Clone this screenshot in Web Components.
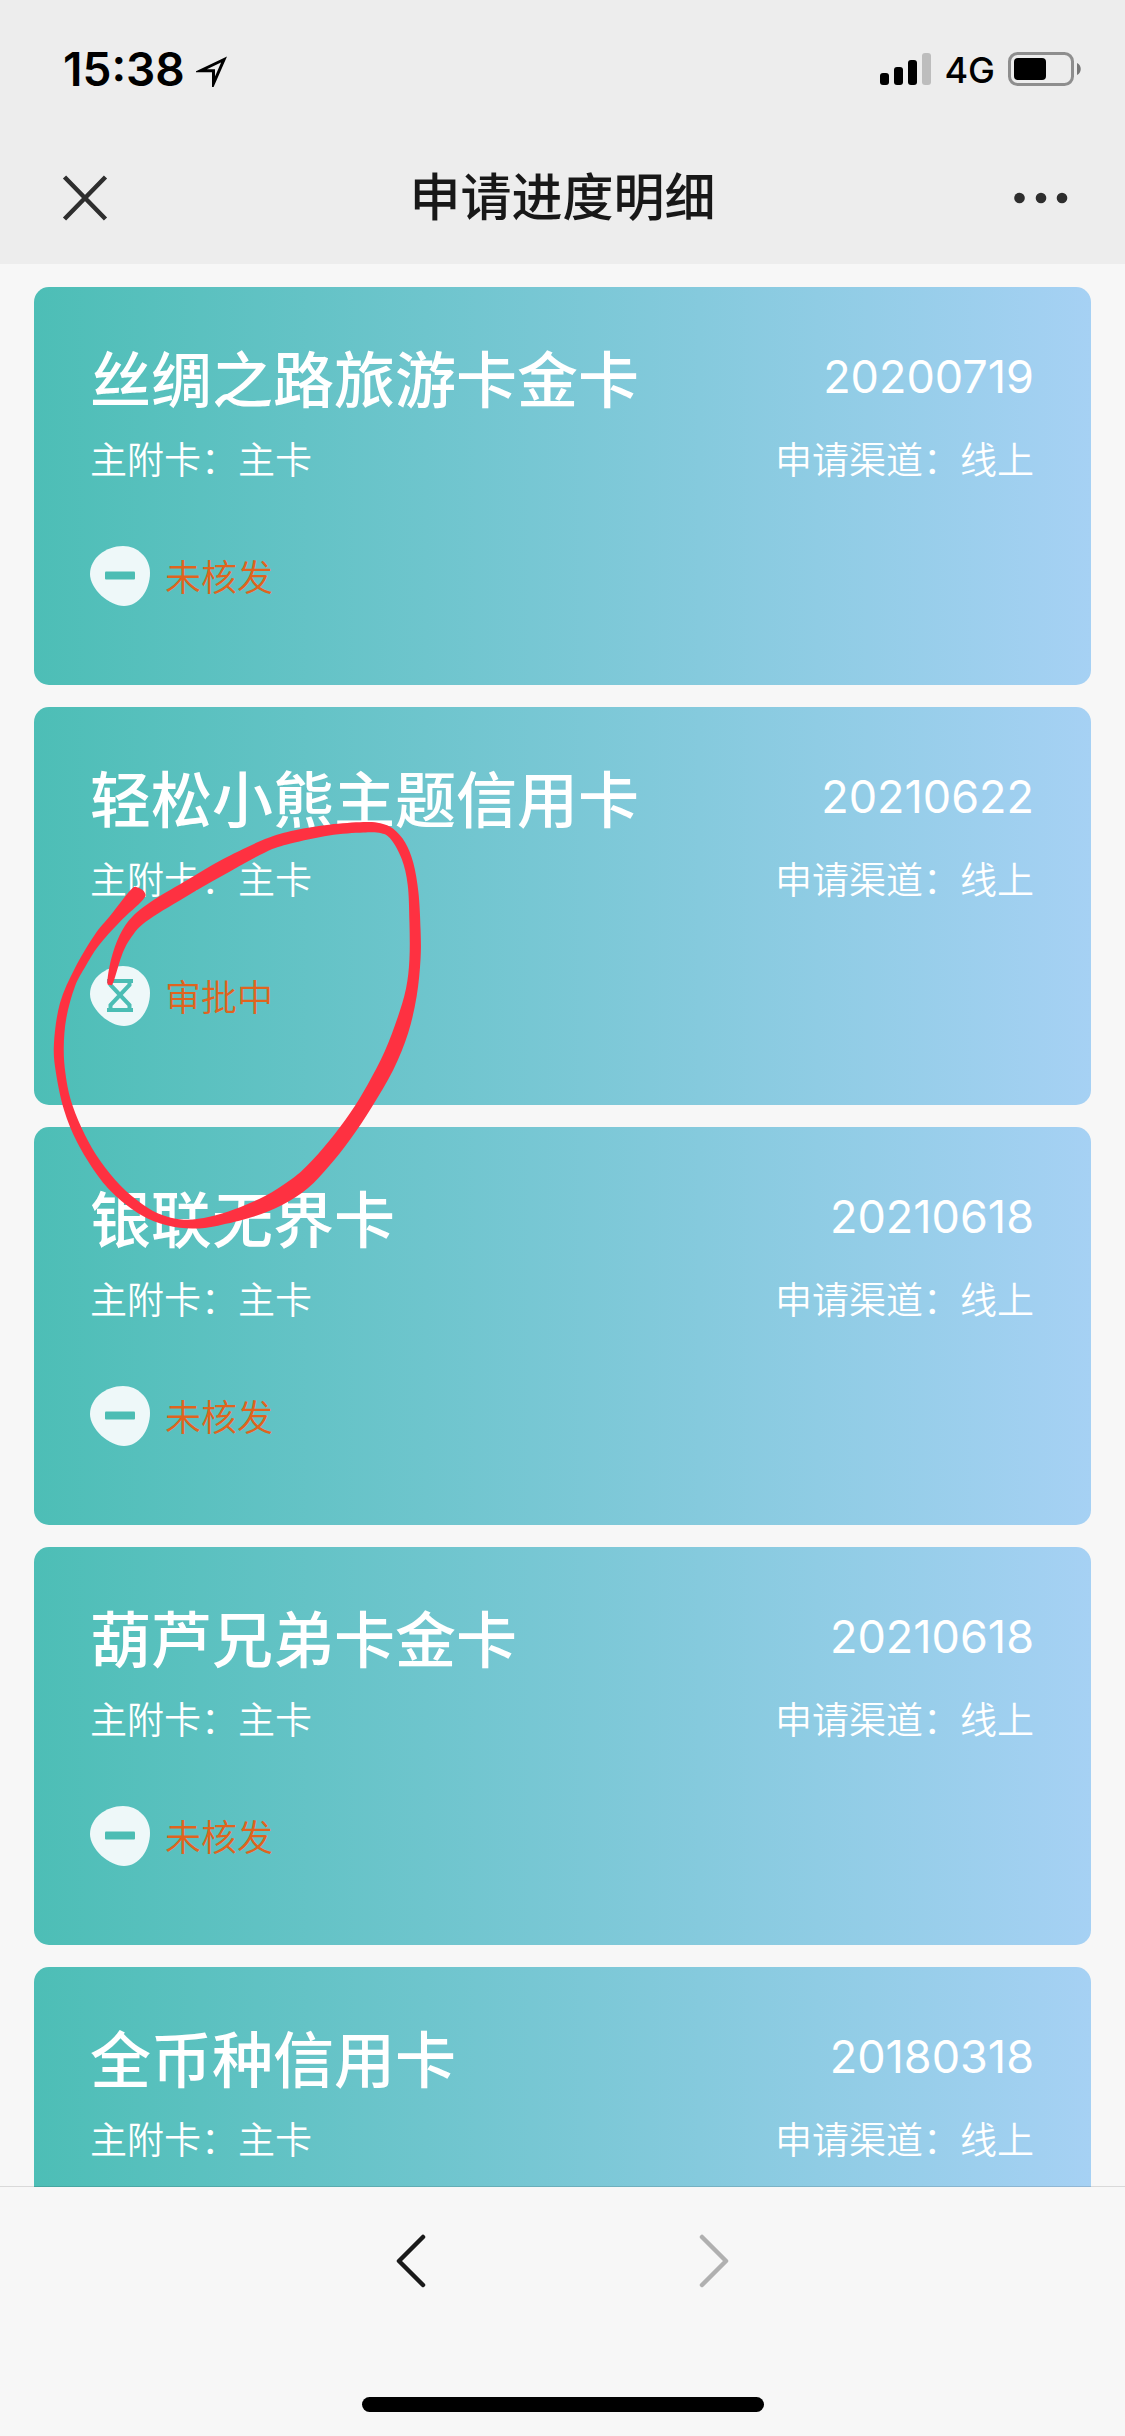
<!DOCTYPE html>
<html lang="zh-CN">
<head>
<meta charset="utf-8">
<meta name="viewport" content="width=device-width, initial-scale=1">
<title>申请进度明细</title>
<style>
  html, body { margin: 0; height: 100%; }
  body {
    background: #f7f7f7;
    font-family: Inter, "Noto Sans CJK SC", sans-serif;
    -webkit-font-smoothing: antialiased;
  }
</style>
</head>
<body>
<progress-app>
  <status-bar slot="top" time="15:38" network="4G"></status-bar>
  <nav-bar slot="top">申请进度明细</nav-bar>

  <card-item date="20200719" holder="主卡" channel="线上" state="rejected">丝绸之路旅游卡金卡</card-item>
  <card-item date="20210622" holder="主卡" channel="线上" state="pending">轻松小熊主题信用卡</card-item>
  <card-item date="20210618" holder="主卡" channel="线上" state="rejected">银联无界卡</card-item>
  <card-item date="20210618" holder="主卡" channel="线上" state="rejected">葫芦兄弟卡金卡</card-item>
  <card-item date="20180318" holder="主卡" channel="线上" state="rejected">全币种信用卡</card-item>

  <ink-loop slot="ink"></ink-loop>
  <tool-bar slot="bottom"></tool-bar>
</progress-app>

<script>
  class BaseElement extends HTMLElement {
    connectedCallback() {
      if (this.shadowRoot) return;
      this.attachShadow({ mode: 'open' }).innerHTML = this.render();
    }
    attr(name) { return this.getAttribute(name) || ''; }
  }

  class ProgressApp extends BaseElement {
    render() {
      return `
        <style>
          :host { display: flex; flex-direction: column; height: 100vh; position: relative; overflow: hidden; }
          header { flex: none; background: #ededed; }
          main { flex: 1; min-height: 0; overflow: hidden; }
          .list { display: flex; flex-direction: column; gap: 22px; padding: 23px 34px; }
          footer { flex: none; position: relative; }
        </style>
        <header><slot name="top"></slot></header>
        <main><div class="list"><slot></slot></div></main>
        <footer><slot name="bottom"></slot></footer>
        <slot name="ink"></slot>`;
    }
  }

  class StatusBar extends BaseElement {
    render() {
      return `
        <style>
          :host { display: flex; justify-content: space-between; align-items: center; box-sizing: border-box; height: 132px; padding: 6px 44px 0 63px; color: #000; }
          div { display: flex; align-items: center; }
          .left { gap: 11px; }
          .right { gap: 13px; }
          time { font-size: 46px; line-height: 54px; font-weight: 600; }
          span { font-size: 36px; line-height: 44px; padding-top: 2px; font-weight: 500; }
          svg { display: block; }
        </style>
        <div class="left">
          <time>${this.attr('time')}</time>
          <svg width="32" height="36" viewBox="0 0 32 36" aria-hidden="true">
            <path d="M28 8.500 4.500 19.700 17.500 19.700 17.500 32.500Z" fill="none" stroke="#000" stroke-width="3" stroke-miterlimit="10"/>
          </svg>
        </div>
        <div class="right">
          <svg width="51" height="34" viewBox="0 0 51 34" aria-hidden="true">
            <rect x="0" y="21" width="9" height="12" rx="3"/>
            <rect x="14" y="15" width="9" height="18" rx="3"/>
            <rect x="28" y="8" width="9" height="25" rx="3"/>
            <rect x="42" y="1" width="9" height="32" rx="3" fill="#bdbdbd"/>
          </svg>
          <span>${this.attr('network')}</span>
          <svg width="73" height="34" viewBox="0 0 73 34" aria-hidden="true">
            <rect x="1.500" y="1.500" width="63" height="31" rx="8" fill="none" stroke="#8e8e8e" stroke-width="3"/>
            <rect x="6" y="6" width="32" height="22" rx="4"/>
            <path d="M69 11C74 13 74 21 69 23Z" fill="#777"/>
          </svg>
        </div>`;
    }
  }

  class NavBar extends BaseElement {
    render() {
      return `
        <style>
          :host { display: flex; justify-content: space-between; align-items: center; height: 132px; padding: 0 52px; box-sizing: border-box; }
          h1 { margin: 0; font-size: 51px; line-height: 66px; font-weight: 500; color: #181818; }
          button { display: flex; padding: 0; border: 0; background: none; }
        </style>
        <button type="button" aria-label="关闭">
          <svg width="66" height="66" viewBox="0 0 66 66"><path d="M12.500 12 53.500 54M53.500 12 12.500 54" stroke="#2e2e2e" stroke-width="4.500"/></svg>
        </button>
        <h1><slot></slot></h1>
        <button type="button" aria-label="更多">
          <svg width="66" height="66" viewBox="0 0 66 66" fill="#2e2e2e"><circle cx="12.500" cy="33" r="5.300"/><circle cx="34" cy="33" r="5.300"/><circle cx="55" cy="33" r="5.300"/></svg>
        </button>`;
    }
  }

  const STATES = {
    rejected: {
      label: '未核发',
      glyph: '<rect x="15" y="25.500" width="30" height="8" rx="1" fill="#4bbdb4"/>'
    },
    pending: {
      label: '审批中',
      glyph: '<path d="M17 15H43M17 44H43M20.500 15V19L39.500 39V44M39.500 15V19L20.500 39V44" fill="none" stroke="#4bbdb4" stroke-width="4"/>'
    }
  };

  class StateBadge extends BaseElement {
    render() {
      const state = STATES[this.attr('state')];
      return `
        <style>
          :host { display: flex; align-items: center; gap: 15px; }
          svg { display: block; }
          span { font-size: 36px; line-height: 50px; padding-top: 3px; font-weight: 350; color: #e0641e; }
        </style>
        <svg width="60" height="60" viewBox="0 0 60 60" aria-hidden="true">
          <path d="M33 0C48 0 60 12 60 27C60 44 49 60 34 60C19 60 0 43 0 28C0 12 16 0 33 0Z" fill="#eef8f9"/>
          ${state.glyph}
        </svg>
        <span>${state.label}</span>`;
    }
  }

  class CardItem extends BaseElement {
    render() {
      return `
        <style>
          :host {
            display: flex; flex-direction: column; flex: none;
            padding: 52px 57px 79px 56px; border-radius: 15px; color: #fff;
            background: linear-gradient(90deg, #4dbeb6, #a6d1f4);
          }
          .row { display: flex; justify-content: space-between; align-items: center; }
          h2 { margin: 0; font-size: 61px; line-height: 84px; font-weight: 500; }
          time { font-size: 45px; line-height: 54px; padding-bottom: 8px; }
          .meta { margin: 13px 0 60px; font-size: 37px; line-height: 50px; font-weight: 350; }
        </style>
        <div class="row"><h2><slot></slot></h2><time>${this.attr('date')}</time></div>
        <div class="row meta"><span>主附卡：${this.attr('holder')}</span><span>申请渠道：${this.attr('channel')}</span></div>
        <state-badge state="${this.attr('state')}"></state-badge>`;
    }
  }

  class ToolBar extends BaseElement {
    render() {
      return `
        <style>
          :host {
            display: flex; flex-direction: column; align-items: center; justify-content: space-between;
            box-sizing: border-box; height: 250px; margin-top: -1px; padding: 40px 0 24px;
            border-top: 1px solid rgba(0, 0, 0, .12);
            background: #f7f7f7; background-clip: padding-box;
          }
          nav { display: flex; gap: 237px; }
          button { display: flex; padding: 0; border: 0; background: none; color: #1a1a1a; }
          button:disabled { color: #b0b0b0; }
          path { fill: none; stroke: currentColor; stroke-width: 4.500; stroke-linecap: round; stroke-linejoin: round; }
          .home { width: 402px; height: 15px; border-radius: 8px; background: #000; }
        </style>
        <nav>
          <button type="button" aria-label="后退"><svg width="66" height="66" viewBox="0 0 66 66"><path d="M45 10 21 34 45 58"/></svg></button>
          <button type="button" aria-label="前进" disabled><svg width="66" height="66" viewBox="0 0 66 66"><path d="M21 10 45 34 21 58"/></svg></button>
        </nav>
        <div class="home"></div>`;
    }
  }

  // Freehand marker loop, drawn over the list. Outline points are joined by a smooth curve.
  const LOOP = [
    [236,513],[190,580],[150,637],[105,725],[70,820],[56,930],[61,1010],[80,1110],[110,1195],[155,1280],[200,1340],
    [260,1392],[320,1420],[380,1429],[440,1421],[520,1398],[590,1365],[650,1320],[700,1260],[750,1187],[800,1100],
    [850,1000],[885,900],[905,800],[914,700],[914,620],[909,520],[897,440],[878,385],[850,348],[820,333],[780,330],
    [700,337],[620,352],[550,376],[450,431],[370,485],[290,540],[240,585],[210,635],[190,700],[181,762],[187,770],
    [195,763],[215,690],[235,645],[270,600],[360,535],[450,475],[550,412],[610,388],[700,366],[780,358],[822,360],
    [845,377],[870,430],[884,500],[888,600],[888,700],[880,780],[860,860],[830,950],[790,1040],[750,1115],[700,1192],
    [650,1257],[610,1297],[550,1341],[480,1376],[420,1397],[360,1405],[300,1388],[250,1352],[200,1298],[155,1230],
    [120,1155],[95,1080],[83,1010],[79,940],[85,860],[105,775],[130,720],[160,665],[210,600],[264,541],[268,520],[252,507]
  ];
  function smooth(points) {
    const n = points.length;
    const at = i => points[(i + n) % n];
    let d = `M${points[0]}`;
    for (let i = 0; i < n; i++) {
      const [a, b, c, e] = [at(i - 1), at(i), at(i + 1), at(i + 2)];
      d += `C${b[0] + (c[0] - a[0]) / 6},${b[1] + (c[1] - a[1]) / 6} ${c[0] - (e[0] - b[0]) / 6},${c[1] - (e[1] - b[1]) / 6} ${c}`;
    }
    return d + 'Z';
  }
  class InkLoop extends BaseElement {
    render() {
      return `
        <style>
          :host { position: absolute; left: 30px; top: 700px; pointer-events: none; }
          svg { display: block; }
        </style>
        <svg width="670" height="580" viewBox="0 0 1568 1568" preserveAspectRatio="none" aria-hidden="true">
          <path d="${smooth(LOOP)}" fill="#fe3141"/>
        </svg>`;
    }
  }

  customElements.define('progress-app', ProgressApp);
  customElements.define('status-bar', StatusBar);
  customElements.define('nav-bar', NavBar);
  customElements.define('state-badge', StateBadge);
  customElements.define('card-item', CardItem);
  customElements.define('tool-bar', ToolBar);
  customElements.define('ink-loop', InkLoop);
</script>
</body>
</html>
